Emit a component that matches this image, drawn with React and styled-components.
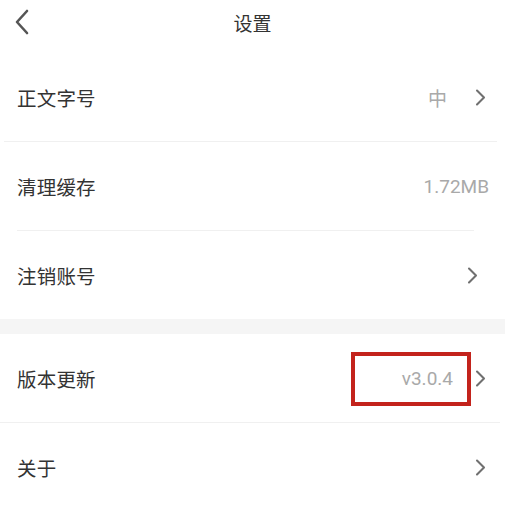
import React from 'react'
import styled, { createGlobalStyle } from 'styled-components'

const GlobalStyle = createGlobalStyle`
  html, body {
    margin: 0;
    padding: 0;
    background: #ffffff;
  }
  body {
    font-family: Roboto, "Noto Sans CJK SC", sans-serif;
    -webkit-font-smoothing: antialiased;
  }
`

const Page = styled.div`
  width: 505px;
  height: 516px;
  overflow: hidden;
  background: #ffffff;
`

const Header = styled.header`
  display: grid;
  grid-template-columns: 60px 1fr 60px;
  align-items: center;
  height: 44px;
  margin-bottom: 9px;
`

const BackButton = styled.button`
  display: flex;
  align-items: center;
  justify-content: flex-start;
  padding: 0 0 0 14px;
  border: 0;
  background: none;
  height: 44px;
  cursor: pointer;
`

const Title = styled.h1`
  margin: 0;
  text-align: center;
  font-size: 19px;
  font-weight: 400;
  color: #333333;
`

const Group = styled.section`
  background: #ffffff;
`

const GroupGap = styled.div`
  height: 15px;
  background: #f5f5f5;
`

const Row = styled.div`
  display: flex;
  align-items: center;
  height: 88px;
  padding: 0 ${props => props.$right || 19}px 0 17px;
  box-sizing: border-box;
`

const Label = styled.span`
  flex: 1;
  font-size: 19.5px;
  color: #333333;
  letter-spacing: 0.2px;
`

const ValueWrap = styled.div`
  position: relative;
  display: flex;
  align-items: center;
  margin-right: ${props => props.$gap || 0}px;
`

const Value = styled.span`
  font-size: 19px;
  color: #a9a9a9;
`

const Highlight = styled.div`
  position: absolute;
  left: -51px;
  right: -18px;
  top: -15px;
  bottom: -16px;
  border: 4.5px solid #c3231c;
  pointer-events: none;
`

const Divider = styled.div`
  height: 1px;
  background: #f0f0f0;
  margin: 0 ${props => props.$insetRight || 0}px 0 ${props => props.$insetLeft || 0}px;
`

const BackIcon = () => (
  <svg width="16" height="26" viewBox="0 0 16 26" fill="none">
    <polyline points="13,2 3,13 13,24" stroke="#555555" strokeWidth="2.6" strokeLinecap="round" strokeLinejoin="round" />
  </svg>
)

const Chevron = () => (
  <svg width="11" height="17" viewBox="0 0 11 17" fill="none">
    <polyline points="2,1.5 9,8.5 2,15.5" stroke="#707070" strokeWidth="2.1" strokeLinecap="round" strokeLinejoin="round" />
  </svg>
)

const rows = [
  { key: 'font', label: '正文字号', value: '中', gap: 28, arrow: true },
  { key: 'cache', label: '清理缓存', value: '1.72MB', right: 16 },
  { key: 'account', label: '注销账号', arrow: true, right: 27 },
]

const rowsBottom = [
  { key: 'version', label: '版本更新', value: 'v3.0.4', gap: 22, arrow: true, highlight: true },
  { key: 'about', label: '关于', arrow: true },
]

const dividersTop = [{ left: 4, right: 8 }, { left: 17, right: 31 }]
const dividersBottom = [{ left: 0, right: 5 }]

const SettingRow = ({ item }) => (
  <Row $right={item.right}>
    <Label>{item.label}</Label>
    {item.value && (
      <ValueWrap $gap={item.arrow ? item.gap : 0}>
        <Value>{item.value}</Value>
        {item.highlight && <Highlight />}
      </ValueWrap>
    )}
    {item.arrow && <Chevron />}
  </Row>
)

const renderGroup = (items, dividers) =>
  items.map((item, index) => (
    <React.Fragment key={item.key}>
      <SettingRow item={item} />
      {index < items.length - 1 && (
        <Divider $insetLeft={dividers[index].left} $insetRight={dividers[index].right} />
      )}
    </React.Fragment>
  ))

const App = () => {
  return (
    <Page>
      <GlobalStyle />
      <Header>
        <BackButton aria-label="返回">
          <BackIcon />
        </BackButton>
        <Title>设置</Title>
        <div />
      </Header>
      <Group>{renderGroup(rows, dividersTop)}</Group>
      <GroupGap />
      <Group>{renderGroup(rowsBottom, dividersBottom)}</Group>
    </Page>
  )
}

export default App
